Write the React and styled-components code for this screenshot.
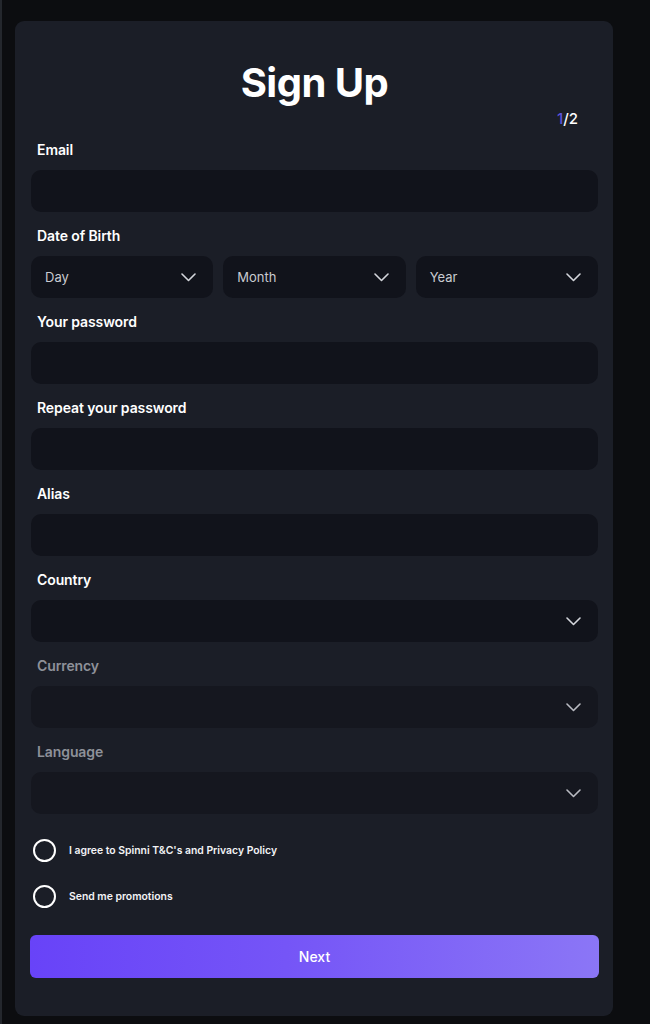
import React from 'react';
import styled, { createGlobalStyle } from 'styled-components';

const GlobalStyle = createGlobalStyle`
  html, body {
    margin: 0;
    padding: 0;
    background: #0c0d10;
  }

  body {
    font-family: Inter, "Noto Sans", "Liberation Sans", sans-serif;
    color: #ffffff;
    -webkit-font-smoothing: antialiased;
  }

  * {
    box-sizing: border-box;
  }
`;

const Page = styled.div`
  min-height: 1024px;
  padding: 21px 37px 7px 15px;
  border-left: 2px solid #24272d;
  background: #0c0d10;
`;

const Card = styled.form`
  width: 598px;
  margin-left: -2px;
  background: #1b1e27;
  border-radius: 9px;
  padding: 37px 15px 38px 16px;
  display: flex;
  flex-direction: column;
`;

const Title = styled.h1`
  margin: 0;
  text-align: center;
  font-size: 40px;
  line-height: 50px;
  font-weight: 700;
  letter-spacing: -0.5px;
  color: #ffffff;
`;

const Step = styled.div`
  margin-top: 2px;
  padding-right: 20px;
  text-align: right;
  font-size: 15px;
  line-height: 18px;
  font-weight: 500;
  color: #ffffff;

  span {
    color: #5d52db;
  }
`;

const Fields = styled.div`
  margin-top: 13px;
  display: flex;
  flex-direction: column;
  gap: 15px;
`;

const Field = styled.div`
  display: flex;
  flex-direction: column;
  gap: 12px;
`;

const Label = styled.label`
  padding-left: 6px;
  font-size: 14px;
  line-height: 17px;
  font-weight: 600;
  letter-spacing: -0.1px;
  color: ${({ disabled }) => (disabled ? '#8e9199' : '#ffffff')};
`;

const Input = styled.input`
  height: 42px;
  width: 100%;
  border: none;
  outline: none;
  border-radius: 10px;
  background: #11131b;
  padding: 0 14px;
  font: inherit;
  color: #ffffff;
`;

const Row = styled.div`
  display: grid;
  grid-template-columns: repeat(3, 1fr);
  gap: 10px;
`;

const Select = styled.div`
  height: 42px;
  border-radius: 10px;
  background: ${({ disabled }) => (disabled ? '#15171f' : '#11131b')};
  padding: 0 17px 0 14px;
  display: flex;
  align-items: center;
  justify-content: space-between;
  font-size: 13px;
  color: #c9cbd1;
`;

const Chevron = ({ color }) => (
  <svg width="15" height="9" viewBox="0 0 15 9" fill="none">
    <path
      d="M1 1l6.5 6.5L14 1"
      stroke={color}
      strokeWidth="1.6"
      strokeLinecap="round"
      strokeLinejoin="round"
    />
  </svg>
);

const Checks = styled.div`
  margin-top: 25px;
  padding-left: 2px;
  display: flex;
  flex-direction: column;
  gap: 23px;
`;

const Check = styled.label`
  display: flex;
  align-items: center;
  gap: 13px;
  font-size: 10.4px;
  font-weight: 600;
  color: #f2f3f5;
`;

const Circle = styled.span`
  width: 23px;
  height: 23px;
  border-radius: 50%;
  border: 2px solid #ffffff;
  flex-shrink: 0;
`;

const NextButton = styled.button`
  margin-top: 27px;
  margin-left: -1px;
  margin-right: -1px;
  height: 43px;
  border: none;
  border-radius: 6px;
  background: linear-gradient(90deg, #6843f8 0%, #7555f7 45%, #8b76f6 100%);
  color: #ffffff;
  font: inherit;
  font-size: 14px;
  font-weight: 500;
  cursor: pointer;
`;

const SelectBox = ({ text, disabled }) => (
  <Select disabled={disabled}>
    <span>{text}</span>
    <Chevron color={disabled ? '#b9bbc2' : '#d4d6dc'} />
  </Select>
);

const App = () => (
  <Page>
    <GlobalStyle />
    <Card onSubmit={(e) => e.preventDefault()}>
      <Title>Sign Up</Title>
      <Step>
        <span>1</span>/2
      </Step>
      <Fields>
        <Field>
          <Label>Email</Label>
          <Input type="email" />
        </Field>
        <Field>
          <Label>Date of Birth</Label>
          <Row>
            <SelectBox text="Day" />
            <SelectBox text="Month" />
            <SelectBox text="Year" />
          </Row>
        </Field>
        <Field>
          <Label>Your password</Label>
          <Input type="password" />
        </Field>
        <Field>
          <Label>Repeat your password</Label>
          <Input type="password" />
        </Field>
        <Field>
          <Label>Alias</Label>
          <Input type="text" />
        </Field>
        <Field>
          <Label>Country</Label>
          <SelectBox />
        </Field>
        <Field>
          <Label disabled>Currency</Label>
          <SelectBox disabled />
        </Field>
        <Field>
          <Label disabled>Language</Label>
          <SelectBox disabled />
        </Field>
      </Fields>
      <Checks>
        <Check>
          <Circle />
          I agree to Spinni T&amp;C's and Privacy Policy
        </Check>
        <Check>
          <Circle />
          Send me promotions
        </Check>
      </Checks>
      <NextButton type="submit">Next</NextButton>
    </Card>
  </Page>
);

export default App;
